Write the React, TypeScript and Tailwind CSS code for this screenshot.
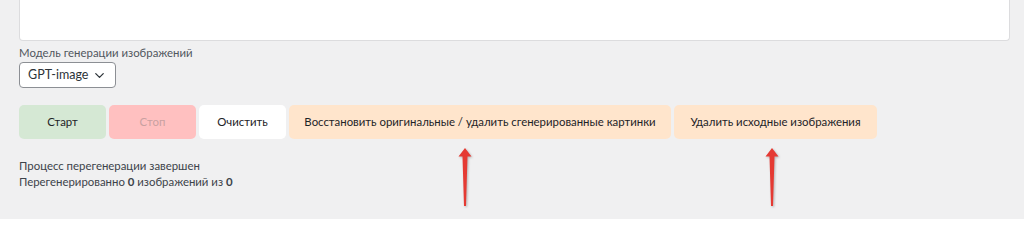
import { ChevronDown } from "lucide-react";

const font = { fontFamily: 'Lato, "Noto Sans", sans-serif' };

const Arrow = () => (
  <svg width="16" height="60" viewBox="0 0 16 60" className="drop-shadow-[1px_1px_1px_rgba(0,0,0,0.25)]">
    <path d="M8 0 L14.5 8.5 L10.5 8.5 L9 58 L7 58 L5.5 8.5 L1.5 8.5 Z" fill="#e53a33" />
  </svg>
);

export default function App() {
  return (
    <div className="w-[1024px] h-[219px] bg-[#f0f0f1] overflow-hidden text-[11.4px] text-[#3c434a] whitespace-nowrap" style={font}>
      <div className="ml-[19px] mr-[14px] h-[41px] bg-white border border-[#dcdcde] border-t-0 rounded-b-[4px]" />

      <div className="ml-[19px] mt-[5px] leading-[14px] text-[#50575e]">Модель генерации изображений</div>
      <div className="ml-[19px] mt-[2px] w-[97px] h-[26px] flex items-center justify-between pl-[8px] pr-[8px] bg-white border border-[#8c8f94] rounded-[4px] text-[12.5px] text-[#2c3338]">
        <span>GPT-image</span>
        <ChevronDown size={15} strokeWidth={2} />
      </div>

      <div className="ml-[19px] mt-[17px] flex gap-[3px] h-[34px] text-[#1d2327]">
        <button className="w-[87px] rounded-[5px] bg-[#d5e8d4]">Старт</button>
        <button className="w-[87px] rounded-[5px] bg-[#ffc0c0] text-[#c9a0a0]">Стоп</button>
        <button className="w-[87px] rounded-[5px] bg-white">Очистить</button>
        <button className="w-[382px] rounded-[5px] bg-[#ffe5cc]">Восстановить оригинальные / удалить сгенерированные картинки</button>
        <button className="w-[203px] rounded-[5px] bg-[#ffe5cc]">Удалить исходные изображения</button>
      </div>

      <div className="flex">
        <div className="ml-[19px] mt-[19px] leading-[16px] w-[424px] text-[#3c434a]">
          <div>Процесс перегенерации завершен</div>
          <div>
            Перегенерированно <b className="font-bold">0</b> изображений из <b className="font-bold">0</b>
          </div>
        </div>
        <div className="ml-[14px] mt-[9px]">
          <Arrow />
        </div>
        <div className="ml-[291px] mt-[9px]">
          <Arrow />
        </div>
      </div>
    </div>
  );
}
